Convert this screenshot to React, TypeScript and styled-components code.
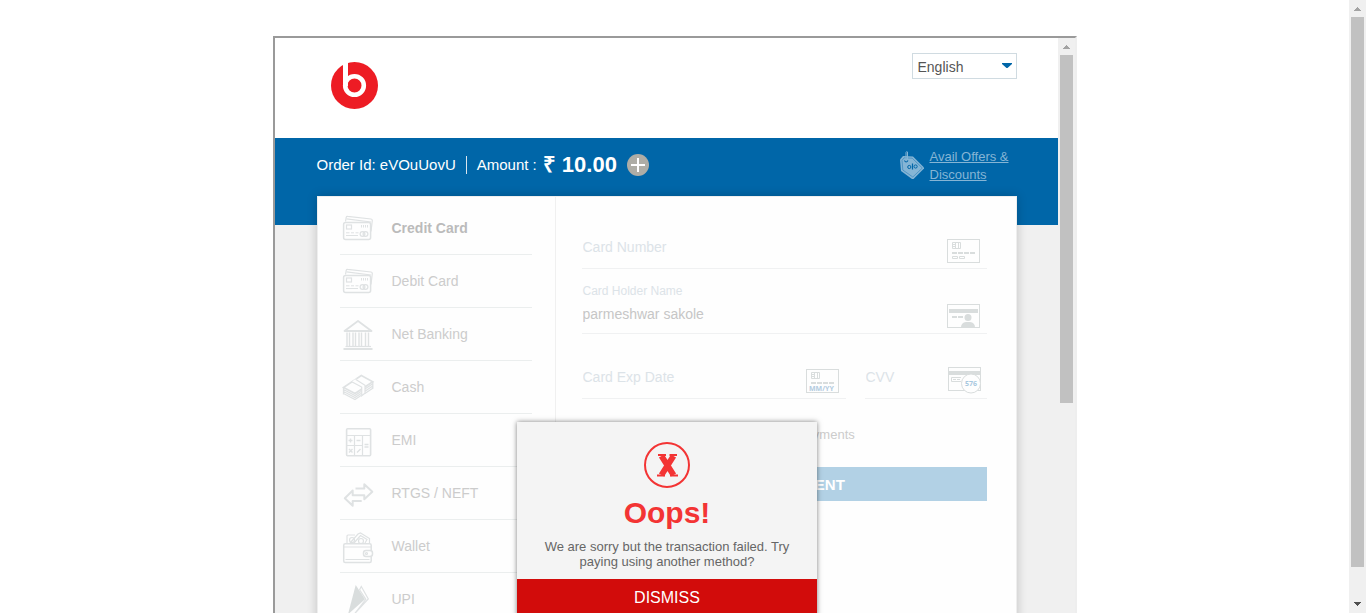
import React from 'react';
import styled, { createGlobalStyle } from 'styled-components';

const GlobalStyle = createGlobalStyle`
  *, *::before, *::after { box-sizing: border-box; }
  body {
    margin: 0;
    background: #fff;
    font-family: 'Liberation Sans', Arial, Helvetica, sans-serif;
    font-size: 14px;
    color: #555;
  }
  button, input, select { font-family: inherit; }
`;

const Page = styled.div`
  display: flex;
  height: 100vh;
  overflow: hidden;
`;

const Stage = styled.main`
  flex: 1;
  min-width: 0;
  padding-top: 36px;
`;

const Frame = styled.div`
  display: flex;
  width: 100%;
  max-width: 804px;
  height: 609px;
  margin: 0 auto;
  border: 2px solid;
  border-color: #9a9a9a #eee #eee #9a9a9a;
`;

const Viewport = styled.div`
  position: relative;
  flex: 1;
  min-width: 0;
  overflow: hidden;
  background: #f0f0f0;
`;

const Track = styled.div`
  display: flex;
  flex-direction: column;
  flex: none;
  width: 17px;
  padding: 0 2px;
  background: #f0f0f0;
`;

const Thumb = styled.div<{ $size: string }>`
  height: ${(p) => p.$size};
  background: #c1c1c1;
`;

const Rail = styled.div`
  flex: 1;
`;

const ArrowBox = styled.svg`
  display: block;
  flex: none;
  width: 13px;
  height: 17px;
`;

const Container = styled.div`
  width: 100%;
  max-width: 700px;
  margin: 0 auto;
`;

const Header = styled.header`
  height: 100px;
  padding-left: 1px;
  background: #fff;
`;

const HeaderRow = styled(Container)`
  display: flex;
  justify-content: space-between;
  align-items: flex-start;
  padding: 15px 0 0 14px;
`;

const Logo = styled.svg`
  width: 47px;
  height: 47px;
  margin-top: 9px;
`;

const LanguageBox = styled.label`
  position: relative;
  display: block;
`;

const LanguageSelect = styled.select`
  appearance: none;
  display: block;
  width: 105px;
  height: 26px;
  padding: 2px 5px 0;
  border: 1px solid #d0dbe1;
  border-radius: 0;
  background: #fff;
  color: #555;
  font-size: 14px;
`;

const Caret = styled.svg`
  position: absolute;
  top: 10px;
  right: 5px;
  width: 10px;
  height: 6px;
  pointer-events: none;
`;

const Body = styled.section`
  padding-left: 1px;
  background: linear-gradient(#0066a8 87px, #f0f0f0 87px);
`;

const OrderBar = styled(Container)`
  display: flex;
  align-items: center;
  height: 58px;
  padding-bottom: 4px;
  color: #fff;
  font-size: 15px;
`;

const OrderId = styled.span`
  padding-right: 10px;
  border-right: 1px solid #d9e5ee;
  line-height: 18px;
`;

const AmountLabel = styled.span`
  padding: 0 6px 0 10px;
  line-height: 18px;
`;

const Amount = styled.strong`
  font-size: 22px;
  line-height: 24px;
`;

const PlusButton = styled.button`
  width: 22px;
  height: 22px;
  margin-left: 10px;
  padding: 0;
  border: 0;
  border-radius: 50%;
  background: #aeada6;
  svg { display: block; }
`;

const Offers = styled.a`
  display: flex;
  align-items: center;
  gap: 6px;
  width: 117px;
  margin-left: auto;
  padding-top: 2px;
  color: #85b5d5;
  font-size: 13px;
  line-height: 18px;
  svg { flex: none; }
`;

const Card = styled(Container)`
  display: flex;
  min-height: 520px;
  border: 1px solid #eee;
  background: #fefefe;
  box-shadow: 0 0 10px rgba(0, 0, 0, 0.2);
`;

const Nav = styled.nav`
  flex: none;
  width: 238px;
  padding: 5px 23px 0 22px;
  border-right: 1px solid #f0f0f0;
`;

const NavList = styled.ul`
  margin: 0;
  padding: 0;
  list-style: none;
`;

const NavItem = styled.button<{ $active?: boolean }>`
  display: flex;
  align-items: center;
  gap: 16px;
  width: 100%;
  height: 53px;
  padding: 0;
  border: 0;
  border-bottom: 1px solid #ebeeee;
  background: none;
  color: ${(p) => (p.$active ? '#bbb' : '#ccc')};
  font-size: 14px;
  font-weight: ${(p) => (p.$active ? 700 : 400)};
  text-align: left;
`;

const NavIcon = styled.svg`
  width: 36px;
  height: 36px;
  fill: none;
  stroke: #dfe2e3;
  stroke-width: 1.2;
`;

const Form = styled.form`
  flex: 1;
  min-width: 0;
  padding: 7px 29px 0 26px;
`;

const FieldRow = styled.div`
  display: grid;
  grid-template-columns: 264px 1fr;
  gap: 19px;
`;

const Field = styled.div`
  display: flex;
  align-items: flex-end;
  height: 65px;
  border-bottom: 1px solid #f0f1f2;
`;

const FieldText = styled.div<{ $filled?: boolean }>`
  flex: 1;
  min-width: 0;
  padding: 0 0 ${(p) => (p.$filled ? 9 : 11)}px 1px;
`;

const FieldLabel = styled.label`
  display: block;
  margin-bottom: 6px;
  color: #dce3e8;
  font-size: 12px;
  line-height: 14px;
`;

const TextInput = styled.input`
  display: block;
  width: 100%;
  height: 20px;
  padding: 0;
  border: 0;
  outline: 0;
  background: none;
  color: #c6c6c6;
  font-size: 14px;
  &::placeholder { color: #dce3e8; opacity: 1; }
`;

const FieldIcon = styled.svg`
  flex: none;
  width: 34px;
  height: 27px;
  margin: 0 6px 4px 0;
  fill: none;
  stroke: #d9dddd;
`;

const SaveRow = styled.label`
  display: flex;
  align-items: center;
  gap: 11px;
  height: 20px;
  margin-top: 25px;
  color: #ccc;
  font-size: 13px;
  white-space: nowrap;
  input { width: 13px; height: 13px; margin: 0; }
`;

const PayButton = styled.button`
  display: block;
  width: 100%;
  height: 34px;
  margin-top: 23px;
  padding: 0;
  border: 0;
  background: #b2d1e5;
  color: #fff;
  font-size: 15px;
  font-weight: 700;
  font-kerning: none;
`;

const Dialog = styled.div`
  position: absolute;
  top: 384px;
  left: 50%;
  width: 300px;
  margin-left: -149px;
  padding-top: 20px;
  background: #f4f4f4;
  box-shadow: 0 0 5px rgba(0, 0, 0, 0.5);
  text-align: center;
`;

const DialogIcon = styled.svg`
  display: block;
  width: 46px;
  height: 46px;
  margin: 0 auto;
`;

const DialogTitle = styled.h2`
  margin: 8px 0 9px;
  color: #f33434;
  font-size: 30px;
  line-height: 34px;
`;

const DialogText = styled.p`
  margin: 0;
  padding: 0 20px 10px;
  color: #666;
  font-size: 13px;
  line-height: 15px;
`;

const DismissButton = styled.button`
  display: block;
  width: 100%;
  height: 38px;
  padding: 0;
  border: 0;
  background: #d20c0b;
  color: #fff;
  font-size: 16px;
`;

function Scrollbar({ size }: { size: string }) {
  return (
    <Track aria-hidden="true">
      <ArrowBox viewBox="0 0 13 17" shapeRendering="crispEdges">
        <path d="M6 7h1v1h1v1h1v1h1v1H3v-1h1V9h1V8h1z" fill="#a3a3a3" />
      </ArrowBox>
      <Rail>
        <Thumb $size={size} />
      </Rail>
      <ArrowBox viewBox="0 0 13 17" shapeRendering="crispEdges">
        <path d="M3 6h7v1H9v1H8v1H7v1H6V9H5V8H4V7H3z" fill="#505050" />
      </ArrowBox>
    </Track>
  );
}

const cardsIcon = (
  <>
    <path d="M5.5 11.5 6.2 7.4q.3-1.2 1.5-1L31 9q1.4.2 1.3 1.5L31 21.5" />
    <path d="m6.5 8.8 24.5 3.2" />
    <rect x="3.6" y="12.5" width="27" height="17" rx="2" strokeWidth="1.5" />
    <rect x="6.5" y="15" width="5" height="4" />
    <path d="M21.5 15v2.5M23.5 15v2.5M25.5 15v2.5M27.5 15v2.5" strokeWidth="1" />
    <path d="M6 22.8h3.5M11 22.8h3M15.5 22.8h3M6 25.5h12" strokeWidth="1" />
    <circle cx="22.5" cy="24" r="2.4" />
    <circle cx="25.5" cy="24" r="2.4" />
  </>
);

const bankIcon = (
  <>
    <path d="M18 5 4.5 15h27z" strokeWidth="1.8" strokeLinejoin="round" />
    <path
      d="M7 16.5v13.5M9.5 16.5v13.5M13 16.5v13.5M15.5 16.5v13.5M19 16.5v13.5M21.5 16.5v13.5M25.5 16.5v13.5M28.5 16.5v13.5"
      strokeWidth="1.4"
    />
    <path d="M5.5 30.5h25.5" />
    <path d="M3.5 33h29" strokeWidth="2" />
  </>
);

const cashIcon = (
  <>
    <path d="M3.5 18.5 21.3 6.5 32.8 12.7 15 24.5z" strokeWidth="1.6" />
    <path
      d="m3.5 20.5 11.5 6 6-4M3.5 22.5l11.5 6 6-4M3.5 24.5l11.5 6 6-4M3.5 18.5v7M24.5 20.3l8.3-5.5M24.5 22.5l8.3-5.5M24.5 24.7l8.3-5.5M32.8 12.7v7"
      strokeWidth="1.3"
    />
    <path d="m11.7 12.7 10 5v9l3.3-2.4V17l-9-7.5z" fill="#fefefe" stroke="none" />
    <path d="m11.7 12.7 10 5.3v8.7l3.3-2.4v-8L15.5 10.2" />
  </>
);

const calcIcon = (
  <>
    <rect x="6.6" y="6.8" width="24" height="27" rx="1" strokeWidth="1.6" />
    <path d="M6.5 13.5h24M14.5 13.5v20M22.5 13.5v20M6.5 23.5h16" />
    <path
      d="M8.5 18.5h4M10.5 16.5v4M16.5 18.5h4M24.5 22.5h4M24.5 25h4M9 27l3.5 3.5M12.5 27 9 30.5M17 30.5l3.5-3.5"
      strokeWidth="1.4"
    />
  </>
);

const transferIcon = (
  <path
    d="M15.5 13.5h8.8V9.2l8 7.5-8 7.5V20.3H12.7v-4.8L4.8 23.2l7.9 7.5V26h9"
    strokeWidth="2"
    strokeLinejoin="round"
  />
);

const walletIcon = (
  <>
    <path d="M7 15V8q0-1 1-1h7M10 15l8-9 2.5-1 9 5.5v5M14 15l6.5-7.5 6.5 4-2 3.5" />
    <circle cx="12" cy="12" r="2.5" />
    <circle cx="21" cy="13" r="2.5" />
    <rect x="3.7" y="15.7" width="27.5" height="18.8" rx="1.5" strokeWidth="1.5" />
    <path d="M4 19h27M5.5 31.5h24" />
    <rect x="23.5" y="22.5" width="9" height="6" rx="2.5" fill="#fefefe" strokeWidth="1.5" />
    <circle cx="26.5" cy="25.5" r="1" />
  </>
);

const upiIcon = (
  <>
    <path d="m15.7 4 9.3 14.3-17 15z" fill="#d9dddd" stroke="none" />
    <path d="m21.3 5.5 7 12.5-13.5 14.5 11-14.2-6.2-9.5z" />
  </>
);

const METHODS = [
  { name: 'Credit Card', icon: cardsIcon },
  { name: 'Debit Card', icon: cardsIcon },
  { name: 'Net Banking', icon: bankIcon },
  { name: 'Cash', icon: cashIcon },
  { name: 'EMI', icon: calcIcon },
  { name: 'RTGS / NEFT', icon: transferIcon },
  { name: 'Wallet', icon: walletIcon },
  { name: 'UPI', icon: upiIcon },
];

const cardChip = (
  <>
    <rect x="0.5" y="2.5" width="32" height="23" />
    <path d="M5.5 5.5h8v6h-8zM5.5 7.5h3M5.5 9.5h3M8.5 5.5v6M11.5 5.5v6" />
    <path d="M5 16h23" strokeWidth="2" strokeDasharray="5 1" />
  </>
);

export default function App() {
  return (
    <>
      <GlobalStyle />
      <Page>
        <Stage>
          <Frame>
            <Viewport>
              <Header>
                <HeaderRow>
                  <Logo viewBox="0 0 47 47" role="img" aria-label="Merchant logo">
                    <circle cx="23.5" cy="23.5" r="23.5" fill="#ed1c24" />
                    <path d="M14.5 0v24" stroke="#fff" strokeWidth="5" />
                    <circle cx="23.5" cy="23.5" r="9.3" fill="none" stroke="#fff" strokeWidth="4.6" />
                  </Logo>
                  <LanguageBox>
                    <LanguageSelect aria-label="Language" defaultValue="English">
                      <option>English</option>
                    </LanguageSelect>
                    <Caret viewBox="0 0 10 6">
                      <path d="M0 0h10v1L5.5 5h-1L0 1z" fill="#0066a8" />
                    </Caret>
                  </LanguageBox>
                </HeaderRow>
              </Header>
              <Body>
                <OrderBar>
                  <OrderId>Order Id: eVOuUovU</OrderId>
                  <AmountLabel>Amount :</AmountLabel>
                  <Amount>₹ 10.00</Amount>
                  <PlusButton type="button" aria-label="Show amount details">
                    <svg width="22" height="22" viewBox="0 0 22 22">
                      <path d="M11 4v14M4 11h14" stroke="#fff" strokeWidth="2" />
                    </svg>
                  </PlusButton>
                  <Offers href="#offers">
                    <svg width="24" height="30" viewBox="0 0 24 30">
                      <path d="M0 8.5 3 5l10 .5L24.500 17 13.500 28H12L1 20z" fill="#85b5d5" />
                      <path d="m2 9.300 2.200-2.500 8 .4L22.300 17l-9.500 9L2.800 19z" fill="none" stroke="#3a87bb" strokeWidth="0.7" />
                      <path d="M4.5 9.500q1.500 3 3.500 0M12.500 12.500v6" fill="none" stroke="#0066a8" strokeWidth="1.200" />
                      <circle cx="9.3" cy="16" r="1.6" fill="none" stroke="#0066a8" />
                      <circle cx="15.6" cy="15.5" r="1.6" fill="none" stroke="#0066a8" />
                      <path d="M6 10V1.500Q6.500 0 7.500 1v8" fill="none" stroke="#85b5d5" strokeWidth="1" />
                    </svg>
                    <span>Avail Offers &amp; Discounts</span>
                  </Offers>
                </OrderBar>
                <Card>
                  <Nav aria-label="Payment methods">
                    <NavList>
                      {METHODS.map((m, i) => (
                        <li key={m.name}>
                          <NavItem type="button" $active={i === 0}>
                            <NavIcon viewBox="0 0 36 36">{m.icon}</NavIcon>
                            {m.name}
                          </NavItem>
                        </li>
                      ))}
                    </NavList>
                  </Nav>
                  <Form>
                    <Field>
                      <FieldText>
                        <TextInput aria-label="Card Number" placeholder="Card Number" />
                      </FieldText>
                      <FieldIcon viewBox="0 0 34 27">
                        {cardChip}
                        <path d="M5.5 19.5h5v2h-5zM12.5 19.5h5v2h-5z" />
                      </FieldIcon>
                    </Field>
                    <Field>
                      <FieldText $filled>
                        <FieldLabel htmlFor="holder">Card Holder Name</FieldLabel>
                        <TextInput id="holder" defaultValue="parmeshwar sakole" />
                      </FieldText>
                      <FieldIcon viewBox="0 0 34 27">
                        <rect x="0.5" y="2.5" width="32" height="23" />
                        <path d="M2 9h29" strokeWidth="4" />
                        <path d="M5 15h5M11 15h5" strokeWidth="2" />
                        <circle cx="21" cy="15.5" r="3.5" fill="#d9dddd" stroke="none" />
                        <path d="M14 25.5q0-5 5-5.500h4q5 .5 5 5.500z" fill="#d9dddd" stroke="none" />
                      </FieldIcon>
                    </Field>
                    <FieldRow>
                      <Field>
                        <FieldText>
                          <TextInput aria-label="Card Exp Date" placeholder="Card Exp Date" />
                        </FieldText>
                        <FieldIcon viewBox="0 0 34 27">
                          {cardChip}
                          <text x="3" y="24" fontSize="7" fontWeight="700" fontFamily="Open Sans, sans-serif" fill="#b2cbe0" stroke="none">
                            MM/YY
                          </text>
                        </FieldIcon>
                      </Field>
                      <Field>
                        <FieldText>
                          <TextInput aria-label="CVV" placeholder="CVV" />
                        </FieldText>
                        <FieldIcon viewBox="0 0 34 27">
                          <rect x="1.5" y="0.5" width="32" height="23" />
                          <path d="M2 6h31" strokeWidth="4" />
                          <path d="M14 10.5H4.500v4H14M6 12.500h3M10 12.500h3" />
                          <circle cx="24" cy="16.5" r="9.5" fill="#fefefe" />
                          <text x="24" y="19" textAnchor="middle" fontSize="7" fontFamily="Open Sans, sans-serif" fontWeight="700" fill="#a8c8e0" stroke="none">
                            576
                          </text>
                        </FieldIcon>
                      </Field>
                    </FieldRow>
                    <SaveRow>
                      <input type="checkbox" defaultChecked />
                      Securely save this card for faster payments
                    </SaveRow>
                    <PayButton type="button">MAKE PAYMENT</PayButton>
                  </Form>
                </Card>
              </Body>
              <Dialog role="alertdialog" aria-labelledby="dialog-title" aria-describedby="dialog-text">
                <DialogIcon viewBox="0 0 46 46" fill="none" stroke="#f33434">
                  <circle cx="23" cy="23" r="22" strokeWidth="2" />
                  <path d="m17.5 14 12 19M29.500 14l-12 19" strokeWidth="6" />
                  <path d="M14 13h8M25.500 13H33M13 33.500h8M26 33.500h8" strokeWidth="2" />
                </DialogIcon>
                <DialogTitle id="dialog-title">Oops!</DialogTitle>
                <DialogText id="dialog-text">
                  We are sorry but the transaction failed. Try paying using another method?
                </DialogText>
                <DismissButton type="button">DISMISS</DismissButton>
              </Dialog>
            </Viewport>
            <Scrollbar size="61%" />
          </Frame>
        </Stage>
        <Scrollbar size="95%" />
      </Page>
    </>
  );
}
